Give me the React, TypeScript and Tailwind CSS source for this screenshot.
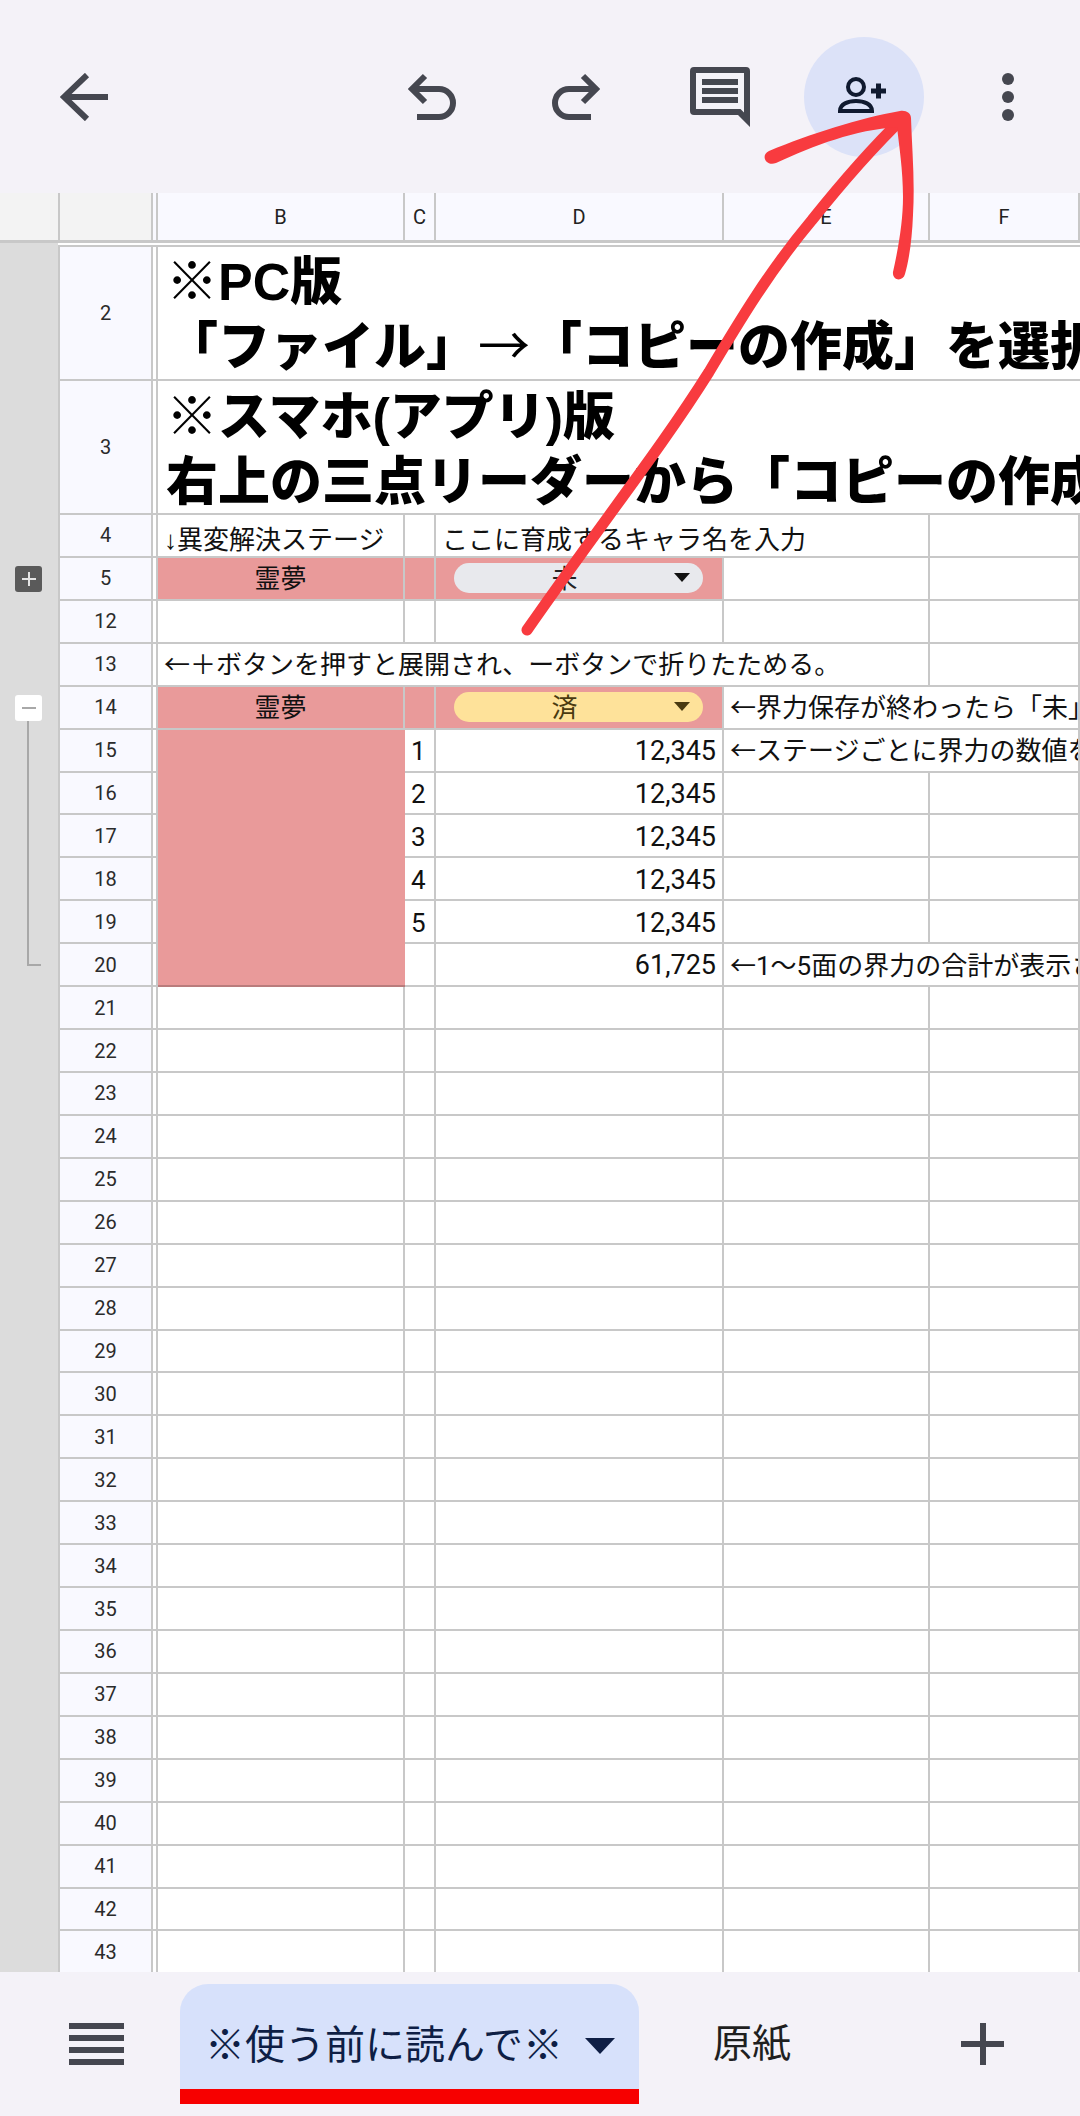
const COLS = [
  { label: "B", w: "w-[247px]" },
  { label: "C", w: "w-[31px]" },
  { label: "D", w: "w-[288px]" },
  { label: "E", w: "w-[206px]" },
  { label: "F", w: "w-[150px]" },
];

const Icon = ({ color = "#454750", size, children }: { color?: string; size: number; children: React.ReactNode }) => (
  <svg width={size} height={size} viewBox={`0 0 ${size} ${size}`} fill="none" stroke={color} strokeWidth="6" className="shrink-0">
    {children}
  </svg>
);

const UndoPaths = () => (
  <>
    <path d="M17 3 L4 16 L17 29" />
    <path d="M4 16 H31 A14 14 0 0 1 31 44 H9" />
  </>
);

const TopBar = () => (
  <div className="h-[193px] shrink-0 bg-[#f4f2f8] flex items-center pl-[60px]">
    <Icon size={48}>
      <path d="M27 3 L4 25 L27 47" transform="translate(0 -1)" />
      <path d="M5 24 H48" />
    </Icon>
    <div className="ml-[300px]">
      <Icon size={48}>
        <UndoPaths />
      </Icon>
    </div>
    <div className="ml-[96px] -scale-x-100">
      <Icon size={48}>
        <UndoPaths />
      </Icon>
    </div>
    <svg width="60" height="60" viewBox="0 0 60 60" className="ml-[90px] shrink-0" fill="#454750">
      <path
        fillRule="evenodd"
        d="M4 0 H56 a4 4 0 0 1 4 4 V60 L48 48 H4 a4 4 0 0 1 -4 -4 V4 a4 4 0 0 1 4 -4Z M6 6 V42 H50.5 L54 45.5 V6 Z"
      />
      <rect x="12" y="12" width="36" height="6" />
      <rect x="12" y="21" width="36" height="6" />
      <rect x="12" y="30" width="36" height="6" />
    </svg>
    <div className="ml-[54px] w-[120px] h-[120px] rounded-full bg-[#dce2f8] flex items-center justify-center shrink-0">
      <svg width="56" height="44" viewBox="0 0 56 44" fill="none" stroke="#101a30" className="-translate-x-[2px] -translate-y-[1px]">
        <circle cx="22" cy="13" r="8" strokeWidth="4" />
        <path d="M6 37 C6 30 14 27 22 27 C30 27 38 30 38 37 Z" strokeWidth="4" />
        <path d="M37 17 H52 M44.5 9.5 V24.5" strokeWidth="5" />
      </svg>
    </div>
    <div className="ml-[78px] flex flex-col gap-[6px]">
      <div className="w-[12px] h-[12px] rounded-full bg-[#454750]" />
      <div className="w-[12px] h-[12px] rounded-full bg-[#454750]" />
      <div className="w-[12px] h-[12px] rounded-full bg-[#454750]" />
    </div>
  </div>
);

const ColumnHeader = () => (
  <div className="h-[50px] shrink-0 flex bg-[#f9f9ff] border-b-[3px] border-[#c8c8c8] text-[20px] text-[#222]">
    <div className="w-[58px] bg-[#f3f3f3] shrink-0" />
    <div className="w-[95px] bg-[#f3f3f3] border-l-2 border-r-2 border-[#c8c8c8] shrink-0" />
    <div className="w-[5px] border-r-2 border-[#c8c8c8] shrink-0" />
    {COLS.map((c) => (
      <div key={c.label} className={`${c.w} shrink-0 border-r-2 border-[#c8c8c8] flex items-center justify-center`}>
        {c.label}
      </div>
    ))}
  </div>
);

const Gutter = ({ kind }: { kind?: "plus" | "minus" | "line" | "end" }) => (
  <div className="w-[58px] shrink-0 bg-[#dcdcdc] flex flex-col">
    {kind === "plus" && (
      <div className="mt-[8px] ml-[15px] w-[27px] h-[26px] rounded-[3px] bg-[#5a5a5a] flex items-center justify-center relative">
        <div className="w-[14px] h-[2px] bg-[#e4e4e4]" />
        <div className="w-[2px] h-[14px] bg-[#e4e4e4] absolute" />
      </div>
    )}
    {kind === "minus" && (
      <>
        <div className="mt-[8px] ml-[15px] w-[27px] h-[26px] rounded-[3px] bg-white flex items-center justify-center">
          <div className="w-[14px] h-[2px] bg-[#a8a8a8]" />
        </div>
        <div className="flex-1 ml-[27px] w-[2px] bg-[#a8a8a8]" />
      </>
    )}
    {kind === "line" && <div className="flex-1 ml-[27px] w-[2px] bg-[#a8a8a8]" />}
    {kind === "end" && <div className="ml-[27px] w-[14px] h-[22px] border-l-2 border-b-2 border-[#a8a8a8]" />}
  </div>
);

const Row = ({
  n,
  gutter,
  height = "h-[42.93px]",
  children,
}: {
  n: number;
  gutter?: "plus" | "minus" | "line" | "end";
  height?: string;
  children?: React.ReactNode;
}) => (
  <div className={`flex shrink-0 ${height}`}>
    <Gutter kind={gutter} />
    <div className="w-[95px] shrink-0 bg-[#f9f9ff] border-l-2 border-r-2 border-b-2 border-[#c8c8c8] flex items-center justify-center text-[20px] text-[#2b2b2b]">
      {n}
    </div>
    <div className="w-[5px] shrink-0 bg-white border-r-2 border-b-2 border-[#c8c8c8]" />
    {children}
  </div>
);

const Cell = ({ w, className = "", children }: { w: string; className?: string; children?: React.ReactNode }) => (
  <div
    className={`${w} shrink-0 border-r-2 border-b-2 border-[#c8c8c8] flex items-center whitespace-nowrap text-[26px] text-[#111] ${className}`}
  >
    {children}
  </div>
);

const PINK = "bg-[#e99a9a] border-[#b97c7c]";

const EmptyCells = () => (
  <>
    {COLS.map((c) => (
      <Cell key={c.label} w={c.w} />
    ))}
  </>
);

const Chip = ({ label, done }: { label: string; done?: boolean }) => (
  <div
    className={`w-[249px] h-[30px] rounded-full ml-[18px] flex items-center relative justify-center pr-[28px] pt-[3px] ${
      done ? "bg-[#fee29a] text-[#4a3a10]" : "bg-[#e8e9ed] text-[#222]"
    }`}
  >
    {label}
    <svg width="16" height="9" viewBox="0 0 16 9" className="absolute right-[13px] top-[10px]">
      <path d="M0 0 H16 L8 9 Z" fill={done ? "#4a3a10" : "#111"} />
    </svg>
  </div>
);

const CharacterCells = ({ chip, done }: { chip: string; done?: boolean }) => (
  <>
    <Cell w="w-[247px]" className={`${PINK} justify-center pt-[3px] text-[#3a1a1a]`}>
      霊夢
    </Cell>
    <Cell w="w-[31px]" className={PINK} />
    <Cell w="w-[288px]" className={`${PINK} pb-[1px]`}>
      <Chip label={chip} done={done} />
    </Cell>
  </>
);

const ScoreRow = ({ n, stage, gutter }: { n: number; stage: number; gutter: "line" }) => (
  <Row n={n} gutter={gutter}>
    <div className="w-[247px] shrink-0 bg-[#e99a9a]" />
    <Cell w="w-[31px]" className="pl-[6px] pt-[3px]">
      {stage}
    </Cell>
    <Cell w="w-[288px]" className="justify-end pr-[6px] pt-[2px] text-[27px]">
      12,345
    </Cell>
    {n === 15 ? (
      <Cell w="w-[356px]" className="pl-[6px] pt-[3px] overflow-hidden">
        ←ステージごとに界力の数値を
      </Cell>
    ) : (
      <>
        <Cell w="w-[206px]" />
        <Cell w="w-[150px]" />
      </>
    )}
  </Row>
);

const HEADING =
  "flex-1 min-w-0 overflow-hidden border-b-2 border-[#c8c8c8] pl-[8px] text-[52px] leading-[65px] font-black text-black whitespace-nowrap font-['Liberation_Sans','Noto_Sans_CJK_JP',sans-serif]";

const Sheet = () => (
  <div className="flex-1 overflow-hidden">
    <div className="flex h-[4px]">
      <div className="w-[58px] shrink-0 bg-[#dcdcdc]" />
      <div className="flex-1 bg-white border-b-2 border-[#c8c8c8]" />
    </div>
    <Row n={2} height="h-[134px]">
      <div className={`${HEADING} pt-[3px]`}>
        <div>※PC版</div>
        <div>
          「ファイル」
          <span className="font-normal leading-[0] font-['Noto_Sans_CJK_JP',sans-serif]">→</span>
          「コピーの作成」を選択
        </div>
      </div>
    </Row>
    <Row n={3} height="h-[134px]">
      <div className={`${HEADING} pt-[4px]`}>
        <div>※スマホ(アプリ)版</div>
        <div>右上の三点リーダーから「コピーの作成」</div>
      </div>
    </Row>
    <Row n={4}>
      <Cell w="w-[247px]" className="pl-[6px] pt-[10px]">
        <span className="font-['Liberation_Sans',sans-serif] leading-[0]">↓</span>異変解決ステージ
      </Cell>
      <Cell w="w-[31px]" />
      <Cell w="w-[494px]" className="pl-[6px] pt-[10px]">
        ここに育成するキャラ名を入力
      </Cell>
      <Cell w="w-[150px]" />
    </Row>
    <Row n={5} gutter="plus">
      <CharacterCells chip="未" />
      <Cell w="w-[206px]" />
      <Cell w="w-[150px]" />
    </Row>
    <Row n={12}>
      <EmptyCells />
    </Row>
    <Row n={13}>
      <Cell w="w-[772px]" className="pl-[6px] pt-[3px]">
        ←＋ボタンを押すと展開され、ーボタンで折りたためる。
      </Cell>
      <Cell w="w-[150px]" />
    </Row>
    <Row n={14} gutter="minus">
      <CharacterCells chip="済" done />
      <Cell w="w-[356px]" className="pl-[6px] pt-[3px] overflow-hidden">
        ←界力保存が終わったら「未」
      </Cell>
    </Row>
    {[1, 2, 3, 4, 5].map((stage) => (
      <ScoreRow key={stage} n={14 + stage} stage={stage} gutter="line" />
    ))}
    <Row n={20} gutter="end">
      <div className={`w-[247px] shrink-0 border-b-2 ${PINK}`} />
      <Cell w="w-[31px]" />
      <Cell w="w-[288px]" className="justify-end pr-[6px] pt-[2px] text-[27px]">
        61,725
      </Cell>
      <Cell w="w-[356px]" className="pl-[6px] pt-[3px] overflow-hidden">
        ←1〜5面の界力の合計が表示さ
      </Cell>
    </Row>
    {Array.from({ length: 23 }, (_, i) => (
      <Row key={i} n={21 + i}>
        <EmptyCells />
      </Row>
    ))}
  </div>
);

const BottomBar = () => (
  <div className="h-[144px] shrink-0 bg-[#f4f2f8] flex pl-[69px]">
    <div className="w-[55px] flex flex-col gap-[6px] mt-[51px]">
      <div className="h-[6px] bg-[#454750]" />
      <div className="h-[6px] bg-[#454750]" />
      <div className="h-[6px] bg-[#454750]" />
      <div className="h-[6px] bg-[#454750]" />
    </div>
    <div className="ml-[56px] mt-[12px] w-[459px] h-[120px] flex flex-col">
      <div className="h-[105px] rounded-t-[28px] bg-[#d7e1fb] flex items-center pl-[25px] pt-[18px] text-[40px] text-[#0e1e45] whitespace-nowrap">
        ※使う前に読んで※
        <svg width="30" height="16" viewBox="0 0 30 16" className="ml-[22px] shrink-0">
          <path d="M0 0 H30 L15 16 Z" fill="#0e1e45" />
        </svg>
      </div>
      <div className="h-[15px] bg-[#f70000]" />
    </div>
    <div className="ml-[74px] mt-[50px] text-[39px] leading-[44px] text-[#1f1f1f]">原紙</div>
    <div className="ml-[170px] mt-[51px] w-[43px] h-[42px] flex items-center justify-center relative">
      <div className="w-[43px] h-[6px] bg-[#454750]" />
      <div className="w-[6px] h-[42px] bg-[#454750] absolute" />
    </div>
  </div>
);

const RedArrow = () => (
  <svg width="1080" height="2116" viewBox="0 0 1080 2116" fill="#f83b3f" className="absolute inset-0 pointer-events-none">
    <path
      d="M527 630 C600 525 660 450 709 372 C740 320 770 270 812 220 C840 185 870 150 903 118"
      fill="none"
      stroke="#f83b3f"
      strokeWidth="11"
      strokeLinecap="round"
    />
    <path
      d="M769 151 C810 134 860 118 900 111 C906 110 911 113 911 118 C912 150 915 180 913 215 C912 240 909 260 905 274 C903 282 892 281 893 272 C899 245 903 220 903 197 C903 170 899 145 897 127 C855 130 815 145 776 163 C766 167 760 155 769 151 Z"
    />
  </svg>
);

export default function App() {
  return (
    <div className="relative w-[1080px] h-[2116px] flex flex-col overflow-hidden font-[Roboto,'Noto_Sans_CJK_JP',sans-serif]">
      <TopBar />
      <ColumnHeader />
      <Sheet />
      <BottomBar />
      <RedArrow />
    </div>
  );
}
